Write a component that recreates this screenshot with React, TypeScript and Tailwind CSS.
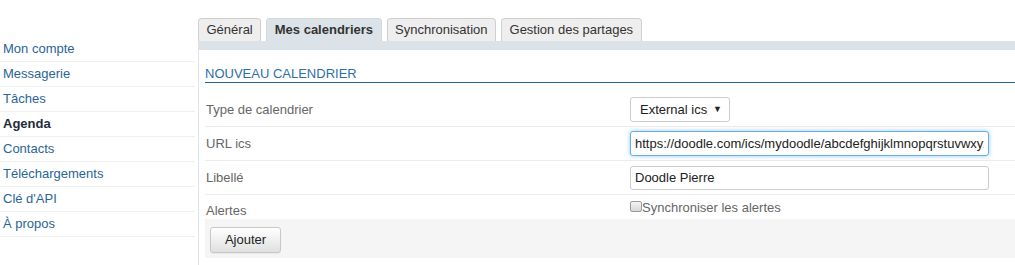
import React from "react";

const font = { fontFamily: '"Liberation Sans", Arial, sans-serif' };

const menu = [
  { label: "Mon compte" },
  { label: "Messagerie" },
  { label: "Tâches" },
  { label: "Agenda", active: true },
  { label: "Contacts" },
  { label: "Téléchargements" },
  { label: "Clé d'API" },
  { label: "À propos" },
];

const tabs = [
  { label: "Général" },
  { label: "Mes calendriers", active: true },
  { label: "Synchronisation" },
  { label: "Gestion des partages" },
];

function Row({ label, children, last }: { label: string; children: React.ReactNode; last?: boolean }) {
  return (
    <div
      className={`flex h-[34px] items-center ${last ? "" : "border-b border-[#ececec]"}`}
    >
      <div className="w-[425px] shrink-0 pl-[1px] text-[13px] leading-[16px] text-[#666]">{label}</div>
      <div className="flex items-center">{children}</div>
    </div>
  );
}

export default function App() {
  return (
    <div className="flex h-[265px] w-[1015px] overflow-hidden bg-white text-[13px]" style={font}>
      {/* Sidebar */}
      <div className="w-[198px] shrink-0 pt-[37px] pr-[3px]">
        {menu.map((m) => (
          <div
            key={m.label}
            className={`flex h-[25px] items-center border-b border-[#efefef] pl-[3px] pb-[1px] leading-[16px] ${
              m.active ? "font-bold text-[#1e2c3a]" : "text-[#2a6496]"
            }`}
          >
            {m.label}
          </div>
        ))}
      </div>

      {/* Main */}
      <div className="flex min-w-0 flex-1 flex-col pt-[18px]">
        <div className="flex h-[23px] items-end gap-[5px]">
          {tabs.map((t) => (
            <div
              key={t.label}
              className={`flex h-[23px] items-center rounded-t-[4px] border border-b-0 px-[7.5px] leading-[16px] text-[#333] ${
                t.active
                  ? "border-[#d2d9de] bg-[#dbe3e8] font-bold"
                  : "border-[#cfcfcf] bg-[#eeeeee]"
              }`}
            >
              {t.label}
            </div>
          ))}
        </div>
        <div className="h-[9px] bg-[#dbe3e8]" />
        <div className="flex-1 border-l border-[#dde3e7] pl-[6px]">
          <div className="border-b border-[#2a6496] pt-[16px] leading-[16px] text-[#2d6fa6]">
            NOUVEAU CALENDRIER
          </div>
          <div className="mt-[10px]">
            <Row label="Type de calendrier">
              <div className="flex h-[25px] w-[100px] items-center justify-between rounded-[3px] border border-[#cccccc] bg-white pl-[9px] pr-[7px] text-[13px] text-[#222]">
                <span>External ics</span>
                <span className="text-[9px] leading-none text-[#222]">▼</span>
              </div>
            </Row>
            <Row label="URL ics">
              <input
                readOnly
                value="https://doodle.com/ics/mydoodle/abcdefghijklmnopqrstuvwxyz"
                className="h-[25px] w-[359px] rounded-[3px] border border-[#66afe9] bg-white px-[4px] text-[13px] text-[#222] shadow-[0_0_4px_rgba(102,175,233,0.7)] outline-none"
                style={font}
              />
            </Row>
            <Row label="Libellé">
              <input
                readOnly
                value="Doodle Pierre"
                className="h-[24px] w-[359px] rounded-[3px] border border-[#cccccc] bg-white px-[4px] text-[13px] text-[#222] outline-none"
                style={font}
              />
            </Row>
            <div className="flex h-[24px]">
              <div className="w-[425px] shrink-0 pl-[1px] pt-[8px] leading-[16px] text-[#666]">Alertes</div>
              <div className="flex items-start pt-[5px]">
                <span className="mt-[1px] inline-block h-[11px] w-[12px] rounded-[2px] border border-[#9a9a9a] bg-gradient-to-b from-[#f4f4f4] to-[#d8d8d8]" />
                <span className="leading-[16px] text-[#666]">Synchroniser les alertes</span>
              </div>
            </div>
          </div>
          <div className="h-[39px] bg-[#f5f5f5] pl-[5px] pt-[8px]">
            <button
              className="flex h-[26px] w-[71px] items-center justify-center rounded-[3px] border border-[#c8c8c8] bg-gradient-to-b from-white to-[#e0e0e0] text-[13px] text-[#222] shadow-[0_1px_1px_rgba(0,0,0,0.05)]"
              style={font}
            >
              Ajouter
            </button>
          </div>
        </div>
      </div>
    </div>
  );
}
